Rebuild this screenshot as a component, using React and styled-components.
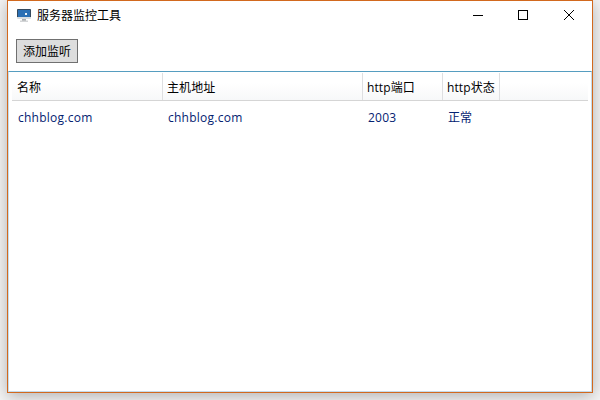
import React from "react";
import styled, { createGlobalStyle } from "styled-components";

const GlobalStyle = createGlobalStyle`
  * { box-sizing: border-box; }
  html, body { margin: 0; background: #f4f4f4; overflow: hidden; }
`;

const Desktop = styled.main`
  width: 600px;
  height: 400px;
  padding: 0 7px 7px;
  overflow: hidden;
  background: #f4f4f4;
  font-family: "Open Sans", "Noto Sans CJK SC", sans-serif;
  font-size: 12px;
  color: #000;
`;

const Window = styled.section`
  display: flex;
  flex-direction: column;
  height: 393px;
  background: #fff;
  border: 1px solid #d2691e;
  box-shadow: 0 3px 15px rgba(0, 0, 0, 0.28);
`;

const TitleBar = styled.header`
  display: flex;
  align-items: center;
  flex: 0 0 28px;
  padding-left: 8px;
`;

const Title = styled.h1`
  flex: 1;
  margin: 0 0 0 5px;
  padding-top: 2px;
  font: inherit;
  line-height: 18px;
`;

const CaptionButton = styled.button`
  display: grid;
  place-items: center;
  width: 46px;
  height: 28px;
  padding: 0 0 0 ${({ $shift }) => $shift || 0}px;
  border: 0;
  background: transparent;
`;

const Toolbar = styled.div`
  flex: 0 0 42px;
  padding: 10px 8px 0;
`;

const AddButton = styled.button`
  display: block;
  width: 62px;
  height: 24px;
  padding: 0;
  border: 1px solid #707070;
  background: #ddd;
  color: #000;
  font: inherit;
  line-height: 23px;
`;

const ListView = styled.div`
  flex: 1;
  padding: 1px 3px;
  border: 1px solid #c5dceb;
  border-top-color: #569dc0;
`;

const Columns = styled.div`
  display: grid;
  grid-template-columns: 151px 200px 80px 57px 1fr;
`;

const HeaderRow = styled(Columns)`
  grid-template-rows: 27px;
  height: 28px;
  border-bottom: 1px solid #d5d5d5;
  background: linear-gradient(#fff 0%, #fff 35%, #f7f8f9 100%);
`;

const HeaderCell = styled.div`
  padding-left: ${({ $first }) => ($first ? 5 : 4)}px;
  border-right: 1px solid #dedfe1;
  line-height: 29px;
  white-space: nowrap;
  letter-spacing: 0.1px;
`;

const DataRow = styled(Columns)`
  height: 32px;
  color: #042271;
`;

const DataCell = styled.div`
  padding-left: ${({ $first }) => ($first ? 6 : 5)}px;
  line-height: 33px;
  white-space: nowrap;
  letter-spacing: ${({ $spacing }) => $spacing || 0}px;
`;

const ServerIcon = () => (
  <svg width="16" height="16" viewBox="0 0 16 16" aria-hidden="true">
    <rect x="1" y="2" width="14" height="9" rx="0.7" fill="#34495e" />
    <rect x="2" y="3" width="12" height="7" fill="#2b70b5" />
    <path d="M1 10h14v1.3l-.7.7H1.7l-.7-.7z" fill="#d8dde1" />
    <path d="M9 6h2v2H9z" fill="#eef5f9" />
    <path d="M6 12h4v2H6z" fill="#a9adb0" />
    <path d="M4 13.5h8V15H4z" fill="#d3d5d7" />
  </svg>
);

const MinimizeIcon = () => (
  <svg width="10" height="10" shapeRendering="crispEdges"><path d="M0 5.5h10" stroke="#000" /></svg>
);

const MaximizeIcon = () => (
  <svg width="10" height="10" shapeRendering="crispEdges"><path d="M.5.5h9v9h-9z" fill="none" stroke="#000" /></svg>
);

const CloseIcon = () => (
  <svg width="10" height="10"><path d="M0 0l10 10M10 0L0 10" stroke="#000" strokeWidth="1" /></svg>
);

const headings = ["名称", "主机地址", "http端口", "http状态"];
const server = ["chhblog.com", "chhblog.com", "2003", "正常"];

export default function App() {
  return (
    <>
      <GlobalStyle />
      <Desktop>
        <Window>
          <TitleBar>
            <ServerIcon />
            <Title>服务器监控工具</Title>
            <CaptionButton aria-label="最小化" $shift={2}><MinimizeIcon /></CaptionButton>
            <CaptionButton aria-label="最大化"><MaximizeIcon /></CaptionButton>
            <CaptionButton aria-label="关闭"><CloseIcon /></CaptionButton>
          </TitleBar>
          <Toolbar><AddButton>添加监听</AddButton></Toolbar>
          <ListView>
            <HeaderRow>
              {headings.map((label, i) => <HeaderCell key={label} $first={i === 0}>{label}</HeaderCell>)}
            </HeaderRow>
            <DataRow>
              {server.map((value, i) => <DataCell key={i} $first={i === 0} $spacing={i < 3 ? 0.25 : 0}>{value}</DataCell>)}
            </DataRow>
          </ListView>
        </Window>
      </Desktop>
    </>
  );
}
